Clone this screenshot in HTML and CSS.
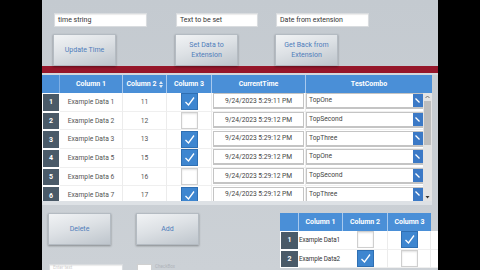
FILE: index.html
```html
<!DOCTYPE html>
<html>
<head>
<meta charset="utf-8">
<link rel="stylesheet" href="styles.css">
</head>
<body>
<div class="app">
  <div class="top">
    <div class="field">time string</div>
    <div class="field mid">Text to be set</div>
    <div class="field">Date from extension</div>
    <div class="btn">Update Time</div>
    <div class="btn">Set Data to<br>Extension</div>
    <div class="btn">Get Back from<br>Extension</div>
  </div>
  <div class="redbar"></div>
  <div class="sep"></div>
  <div class="gridwrap">
    <div class="row head">
      <div class="c hn"></div>
      <div class="c">Column 1</div>
      <div class="c">Column 2 <svg class="sort" width="4" height="7" viewBox="0 0 4 7"><path d="M0 3L2 0L4 3Z M0 4L2 7L4 4Z" fill="#dfe9f5"/></svg></div>
      <div class="c">Column 3</div>
      <div class="c">CurrentTime</div>
      <div class="c">TestCombo</div>
    </div>
    <div class="body">
      <div class="row">
        <div class="c num"><span>1</span></div>
        <div class="c">Example Data 1</div>
        <div class="c">11</div>
        <div class="c"><span class="cb on"><svg width="15" height="15" viewBox="0 0 15 15"><path d="M3.5 8L6.5 11L12 3.5" fill="none" stroke="#fff" stroke-width="1.3"/></svg></span></div>
        <div class="c"><span class="tbox">9/24/2023 5:29:11 PM</span></div>
        <div class="c"><span class="combo"><span class="ct">TopOne</span><span class="cbtn"><svg width="16" height="16" viewBox="0 0 16 16"><path d="M2.5 5.5L6.5 9.5" fill="none" stroke="#fff" stroke-width="1.2"/></svg></span></span></div>
      </div>
      <div class="row">
        <div class="c num"><span>2</span></div>
        <div class="c">Example Data 2</div>
        <div class="c">12</div>
        <div class="c"><span class="cb"></span></div>
        <div class="c"><span class="tbox">9/24/2023 5:29:12 PM</span></div>
        <div class="c"><span class="combo"><span class="ct">TopSecond</span><span class="cbtn"><svg width="16" height="16" viewBox="0 0 16 16"><path d="M2.5 5.5L6.5 9.5" fill="none" stroke="#fff" stroke-width="1.2"/></svg></span></span></div>
      </div>
      <div class="row">
        <div class="c num"><span>3</span></div>
        <div class="c">Example Data 3</div>
        <div class="c">13</div>
        <div class="c"><span class="cb on"><svg width="15" height="15" viewBox="0 0 15 15"><path d="M3.5 8L6.5 11L12 3.5" fill="none" stroke="#fff" stroke-width="1.3"/></svg></span></div>
        <div class="c"><span class="tbox">9/24/2023 5:29:12 PM</span></div>
        <div class="c"><span class="combo"><span class="ct">TopThree</span><span class="cbtn"><svg width="16" height="16" viewBox="0 0 16 16"><path d="M2.5 5.5L6.5 9.5" fill="none" stroke="#fff" stroke-width="1.2"/></svg></span></span></div>
      </div>
      <div class="row">
        <div class="c num"><span>4</span></div>
        <div class="c">Example Data 5</div>
        <div class="c">15</div>
        <div class="c"><span class="cb on"><svg width="15" height="15" viewBox="0 0 15 15"><path d="M3.5 8L6.5 11L12 3.5" fill="none" stroke="#fff" stroke-width="1.3"/></svg></span></div>
        <div class="c"><span class="tbox">9/24/2023 5:29:12 PM</span></div>
        <div class="c"><span class="combo"><span class="ct">TopOne</span><span class="cbtn"><svg width="16" height="16" viewBox="0 0 16 16"><path d="M2.5 5.5L6.5 9.5" fill="none" stroke="#fff" stroke-width="1.2"/></svg></span></span></div>
      </div>
      <div class="row">
        <div class="c num"><span>5</span></div>
        <div class="c">Example Data 6</div>
        <div class="c">16</div>
        <div class="c"><span class="cb"></span></div>
        <div class="c"><span class="tbox">9/24/2023 5:29:12 PM</span></div>
        <div class="c"><span class="combo"><span class="ct">TopSecond</span><span class="cbtn"><svg width="16" height="16" viewBox="0 0 16 16"><path d="M2.5 5.5L6.5 9.5" fill="none" stroke="#fff" stroke-width="1.2"/></svg></span></span></div>
      </div>
      <div class="row">
        <div class="c num"><span>6</span></div>
        <div class="c">Example Data 7</div>
        <div class="c">17</div>
        <div class="c"><span class="cb on"><svg width="15" height="15" viewBox="0 0 15 15"><path d="M3.5 8L6.5 11L12 3.5" fill="none" stroke="#fff" stroke-width="1.3"/></svg></span></div>
        <div class="c"><span class="tbox">9/24/2023 5:29:12 PM</span></div>
        <div class="c"><span class="combo"><span class="ct">TopThree</span><span class="cbtn"><svg width="16" height="16" viewBox="0 0 16 16"><path d="M2.5 5.5L6.5 9.5" fill="none" stroke="#fff" stroke-width="1.2"/></svg></span></span></div>
      </div>
    </div>
    <div class="vscroll">
      <svg class="arr" width="9" height="8" viewBox="0 0 9 8"><path d="M2.5 5L4.5 3L6.5 5" fill="none" stroke="#666" stroke-width="0.9"/></svg>
      <div class="thumb"></div>
      <div class="track"></div>
      <svg class="arr" width="9" height="8" viewBox="0 0 9 8"><path d="M2.5 3H6.5L4.5 5.5Z" fill="#333"/></svg>
    </div>
    <div class="gridfoot"></div>
  </div>
  <div class="bottom">
    <div class="left">
      <div class="btnrow">
        <div class="btn">Delete</div>
        <div class="btn">Add</div>
      </div>
      <div class="inrow">
        <div class="field small">Enter text</div>
        <span class="cbsm"></span>
        <span class="lbl">CheckBox</span>
      </div>
    </div>
    <div class="sgrid">
      <div class="srow head">
        <div class="c hn"></div>
        <div class="c">Column 1</div>
        <div class="c">Column 2</div>
        <div class="c">Column 3</div>
      </div>
      <div class="srow">
        <div class="c num"><span>1</span></div>
        <div class="c left">Example Data1</div>
        <div class="c"><span class="cb"></span></div>
        <div class="c"><span class="cb on"><svg width="15" height="15" viewBox="0 0 15 15"><path d="M3.5 8L6.5 11L12 3.5" fill="none" stroke="#fff" stroke-width="1.3"/></svg></span></div>
      </div>
      <div class="srow">
        <div class="c num"><span>2</span></div>
        <div class="c left">Example Data2</div>
        <div class="c"><span class="cb on"><svg width="15" height="15" viewBox="0 0 15 15"><path d="M3.5 8L6.5 11L12 3.5" fill="none" stroke="#fff" stroke-width="1.3"/></svg></span></div>
        <div class="c"><span class="cb"></span></div>
      </div>
    </div>
  </div>
</div>
</body>
</html>
```
FILE: styles.css
```css
* { box-sizing: border-box; }
html, body { margin: 0; padding: 0; }
body {
  background: #000;
  width: 480px;
  height: 270px;
  overflow: hidden;
  font-family: Roboto, "Liberation Sans", sans-serif;
  font-size: 7px;
}
.app {
  margin-left: 42px;
  width: 396px;
  height: 270px;
  background: linear-gradient(180deg, #c4cad0 0%, #ccd1d6 100%);
  overflow: hidden;
}
.top {
  display: grid;
  grid-template-columns: 122px 100px 100px;
  grid-template-rows: 14px 32px;
  row-gap: 7px;
  padding: 13px 0 0 11px;
  height: 66px;
}
.field {
  background: #fff;
  border: 1px solid #d9dcdf;
  box-shadow: inset 0 1px 1px rgba(0,0,0,0.08);
  color: #333;
  line-height: 12px;
  padding-left: 3px;
  margin-left: 1px;
  width: 93px;
  white-space: nowrap;
  overflow: hidden;
}
.field.mid { width: 82px; }
.btn {
  width: 63px;
  height: 32px;
  background: linear-gradient(165deg, #f1f3f5 0%, #dde1e5 45%, #bec5cc 100%);
  border: 1px solid #b4bbc2;
  box-shadow: 0 1px 2px rgba(0,0,0,0.35);
  color: #4f7dbb;
  display: flex;
  align-items: center;
  justify-content: center;
  text-align: center;
  line-height: 10px;
}
.redbar { height: 7px; background: #95162a; }
.sep { height: 2px; background: #d3d7dc; }
.gridwrap {
  position: relative;
  width: 390px;
}
.row {
  display: grid;
  grid-template-columns: 18px 63px 44px 45px 94px 126px;
  height: 18.7px;
}
.row.head { height: 18px; background: #4a8fd7; }
.head .c {
  color: #fff;
  font-weight: 700;
  border-right: 1px solid #a8c9ee;
  display: flex;
  align-items: center;
  justify-content: center;
}
.head .c:last-child { border-right: none; }
.head .hn { border-right: 1px solid #7fb0e6; }
.sort { margin-left: 2px; }
.body {
  height: 108px;
  overflow: hidden;
  background: #fff;
  font-size: 6.7px;
}
.body .c {
  color: #555;
  display: flex;
  align-items: center;
  justify-content: center;
  border-right: 1px solid #ececec;
  border-bottom: 1px solid #efefef;
  white-space: nowrap;
  overflow: hidden;
}
.c.num {
  background: #fff;
  padding: 1px;
  border: none;
  font-size: 7px;
}
.c.num span {
  display: flex;
  align-items: center;
  justify-content: center;
  width: 100%;
  height: 100%;
  background: #4a5a68;
  color: #fff;
  font-weight: 700;
}
.cb {
  display: inline-block;
  width: 17px;
  height: 17px;
  background: #fff;
  border: 1px solid #cfcfcf;
  box-shadow: inset 0 1px 2px rgba(0,0,0,0.12);
}
.cb.on {
  background: #3e86d0;
  border: 1px solid #2f6fb2;
  box-shadow: none;
}
.cb svg { display: block; }
.tbox {
  width: 92px;
  height: 16px;
  margin: 0 1px 1px 1px;
  border: 1px solid #c4c4c4;
  border-bottom-width: 2px;
  background: #fff;
  color: #444;
  display: flex;
  align-items: center;
  justify-content: center;
}
.body .c:last-child { justify-content: flex-start; }
.combo {
  display: flex;
  width: 124px;
  height: 16px;
  margin-bottom: 1px;
  border: 1px solid #c4c4c4;
  border-bottom-width: 2px;
  background: #fff;
}
.ct {
  flex: 1;
  color: #444;
  padding-left: 2px;
  line-height: 13px;
}
.cbtn {
  width: 16px;
  background: #3b79c6;
  display: flex;
  align-items: center;
  justify-content: center;
  overflow: hidden;
}
.vscroll {
  position: absolute;
  right: 0;
  top: 18px;
  width: 9px;
  height: 108px;
  background: #e4e4e4;
  display: flex;
  flex-direction: column;
  align-items: center;
}
.vscroll .arr { flex: none; }
.thumb {
  width: 7px;
  height: 44px;
  background: #bdbdbd;
}
.track { flex: 1; }
.gridfoot {
  height: 4px;
  background: #dde1e5;
}
.bottom {
  display: flex;
  padding-top: 8px;
}
.left {
  width: 238px;
  padding-left: 6px;
}
.btnrow {
  display: flex;
  gap: 25px;
}
.inrow {
  display: flex;
  align-items: flex-start;
  margin-top: 19px;
  padding-left: 1px;
  height: 7px;
}
.field.small {
  width: 74px;
  height: 7px;
  margin-left: 0;
  color: #d0d0d0;
  font-size: 4.5px;
  line-height: 5px;
  border-bottom: none;
}
.cbsm {
  width: 15px;
  height: 7px;
  background: #fff;
  border: 1px solid #d0d0d0;
  border-bottom: none;
  margin-left: 14px;
}
.lbl { color: #b0b4ba; margin-left: 3px; font-size: 4.5px; line-height: 6px; }
.sgrid { width: 151px; }
.srow {
  display: grid;
  grid-template-columns: 19px 44px 45px 43px;
  height: 18.7px;
}
.srow.head { height: 18px; background: #4a8fd7; }
.srow .c {
  display: flex;
  align-items: center;
  justify-content: center;
  background: #fff;
  color: #333;
  border-right: 1px solid #ececec;
  border-bottom: 1px solid #efefef;
  white-space: nowrap;
}
.srow.head .c { background: #4a8fd7; color: #fff; border-right: 1px solid #a8c9ee; border-bottom: none; }
.srow.head .c:last-child { border-right: none; }
.srow .c.left { justify-content: flex-start; padding-left: 0; font-size: 6.3px; letter-spacing: -0.1px; }
.srow .c.num { border: none; }
```
